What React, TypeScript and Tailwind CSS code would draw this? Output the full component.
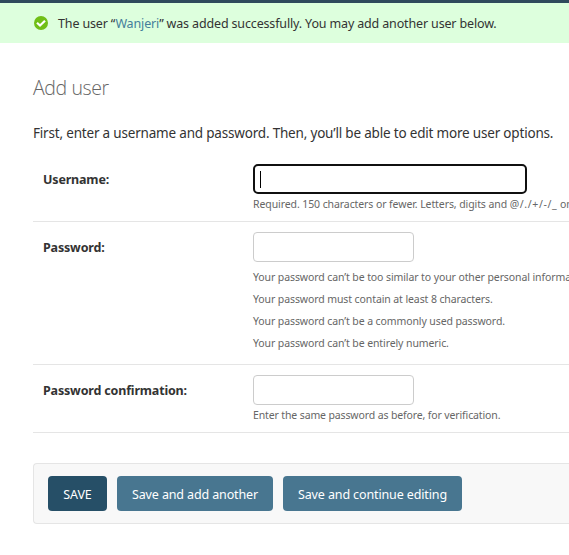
import React from "react";

function SuccessIcon() {
  return (
    <svg width="14" height="14" viewBox="0 0 14 14" className="shrink-0">
      <circle cx="7" cy="7" r="7" fill="#70bf16" />
      <path d="M3 6.8 6 9.6l5-4.9" fill="none" stroke="#fff" strokeWidth="2.2" />
    </svg>
  );
}

function Label({ children }: { children: React.ReactNode }) {
  return (
    <div className="w-[220px] shrink-0 pt-1.5 pl-2.5 text-[12.5px] leading-5 font-bold tracking-[-0.17px] text-[#333]">
      {children}
    </div>
  );
}

export default function App() {
  return (
    <div className="h-[555px] w-[569px] overflow-hidden bg-white font-['Noto_Sans','Open_Sans',sans-serif] whitespace-nowrap text-[#333]">
      <div className="h-[3px] bg-[#2f4a5c]" />
      <div className="flex h-10 items-center bg-[#ddffdd] pl-[34px] text-[12.5px]">
        <SuccessIcon />
        <p className="ml-2.5 pt-0.5 tracking-[-0.15px]">
          <span>The user “</span>
          <a className="text-[#447e9b]">Wanjeri</a>
          <span>” was added successfully. You may add another user below.</span>
        </p>
      </div>

      <main className="pl-[33px]">
        <h1 className="pt-8 font-['Open_Sans',sans-serif] text-[19.5px] leading-[26px] font-light tracking-[-0.4px] text-[#666]">
          Add user
        </h1>
        <p className="pt-[22px] text-[13.5px] leading-5 tracking-[-0.19px]">
          First, enter a username and password. Then, you’ll be able to edit more user options.
        </p>

        <div className="mt-[11px] flex h-[68px] border-b border-[#e5e5e5] pt-2.5">
          <Label>Username:</Label>
          <div>
            <div className="flex h-[30px] w-[274px] items-center rounded-[5px] border-2 border-[#101010] bg-white pl-[5px]">
              <div className="h-[17px] w-px bg-black" />
            </div>
            <p className="pt-[2px] text-[10.5px] leading-4 tracking-[-0.09px] text-[#666]">
              Required. 150 characters or fewer. Letters, digits and <span className="tracking-[0.65px]">@/./+/-/_</span> only.
            </p>
          </div>
        </div>

        <div className="flex h-[143px] border-b border-[#e5e5e5] pt-2.5">
          <Label>Password:</Label>
          <div>
            <div className="h-[30px] w-[161px] rounded border border-[#ccc] bg-white" />
            <ul className="pt-1 text-[10.5px] leading-[22px] tracking-[-0.1px] text-[#666]">
              <li>Your password can’t be too similar to your other personal information.</li>
              <li>Your password must contain at least 8 characters.</li>
              <li>Your password can’t be a commonly used password.</li>
              <li>Your password can’t be entirely numeric.</li>
            </ul>
          </div>
        </div>

        <div className="flex h-[68px] border-b border-[#e5e5e5] pt-2.5">
          <Label>Password confirmation:</Label>
          <div>
            <div className="h-[30px] w-[161px] rounded border border-[#ccc] bg-white" />
            <p className="pt-[2px] text-[10.5px] leading-4 tracking-[-0.13px] text-[#666]">
              Enter the same password as before, for verification.
            </p>
          </div>
        </div>

        <div className="mt-[30px] flex h-[61px] items-start gap-2.5 rounded-l border border-r-0 border-[#e5e5e5] bg-[#f8f8f8] pt-3 pl-3.5 text-[12.5px] text-white">
          <button className="h-[35px] w-[59px] rounded bg-[#264f67] pt-[3px] tracking-[-0.1px]">SAVE</button>
          <button className="h-[35px] w-[156px] rounded bg-[#487690] pt-[3px] tracking-[-0.13px]">Save and add another</button>
          <button className="h-[35px] w-[179px] rounded bg-[#487690] pt-[3px] tracking-[-0.12px]">Save and continue editing</button>
        </div>
      </main>
    </div>
  );
}
